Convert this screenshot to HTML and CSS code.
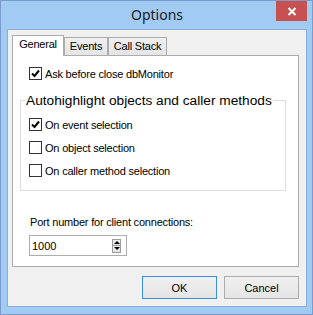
FILE: index.html
```html
<!DOCTYPE html>
<html>

<head>
    <meta charset="utf-8">
    <link rel="stylesheet" href="styles.css">
</head>

<body>

    <div class="window">
        <div class="titlebar">
            <span></span>
            <div class="title">Options</div>
            <div class="close">
                <svg width="10" height="9" viewBox="0 0 10 9">
                    <path d="M1.5 1 L8.5 8 M8.5 1 L1.5 8" stroke="#fff" stroke-width="2" fill="none" />
                </svg>
            </div>
        </div>

        <div class="client">
            <div class="tabs">
                <div class="tab tab-general active">General</div>
                <div class="tab tab-events">Events</div>
                <div class="tab tab-stack">Call Stack</div>
            </div>

            <div class="page">
                <div class="check-row top-row">
                    <span class="box">
                        <svg width="11" height="11" viewBox="0 0 11 11">
                            <path d="M2 5.5 L4.5 8 L9 2.5" stroke="#000" stroke-width="2" fill="none" />
                        </svg>
                    </span>
                    <span>Ask before close dbMonitor</span>
                </div>

                <fieldset class="group">
                    <legend>Autohighlight objects and caller methods</legend>
                    <div class="group-list">
                        <div class="check-row">
                            <span class="box">
                                <svg width="11" height="11" viewBox="0 0 11 11">
                                    <path d="M2 5.5 L4.5 8 L9 2.5" stroke="#000" stroke-width="2" fill="none" />
                                </svg>
                            </span>
                            <span>On event selection</span>
                        </div>
                        <div class="check-row">
                            <span class="box"></span>
                            <span>On object selection</span>
                        </div>
                        <div class="check-row">
                            <span class="box"></span>
                            <span>On caller method selection</span>
                        </div>
                    </div>
                </fieldset>

                <div class="port-label">Port number for client connections:</div>
                <div class="spin">
                    <span class="spin-value">1000</span>
                    <span class="spin-buttons">
                        <span class="spin-btn up"></span>
                        <span class="spin-btn down"></span>
                    </span>
                </div>
            </div>

            <div class="buttons">
                <button class="btn default">OK</button>
                <button class="btn">Cancel</button>
            </div>
        </div>
    </div>

</body>

</html>
```

FILE: styles.css
```css
* {
    box-sizing: border-box;
}

body {
    margin: 0;
    font-family: "Liberation Sans", Arial, sans-serif;
    font-size: 11px;
    color: #000;
}

.window {
    width: 313px;
    height: 315px;
    border: 1px solid #7a9ccd;
    background: #a2cbf4;
    padding: 0 5px 7px 6px;
    display: flex;
    flex-direction: column;
}

.titlebar {
    height: 28px;
    flex: none;
    display: grid;
    grid-template-columns: 1fr auto 1fr;
}

.title {
    font-family: "Noto Sans", sans-serif;
    font-size: 14px;
    line-height: 28px;
    color: #1a1a1a;
}

.close {
    justify-self: end;
    width: 31px;
    height: 20px;
    background: #c75050;
    display: flex;
    align-items: center;
    justify-content: center;
}

.client {
    flex: 1;
    background: #f0f0f0;
    border: 1px solid #89acd9;
    padding: 5px 7px 7px 4px;
    display: flex;
    flex-direction: column;
}

/* tab strip */
.tabs {
    display: flex;
    align-items: flex-end;
    border-bottom: 1px solid #acacac;
}

.tab {
    height: 18px;
    border: 1px solid #acacac;
    border-bottom: none;
    background: linear-gradient(#f0f0f0, #e5e5e5);
    padding-top: 1px;
    line-height: 14px;
    text-align: center;
    letter-spacing: -0.2px;
}

.tab.active {
    height: 21px;
    margin-bottom: -1px;
    background: #fff;
}

.tab-general {
    width: 52px;
}

.tab-events {
    width: 44px;
}

.tab-stack {
    width: 59px;
}

.page {
    flex: 1;
    background: #fff;
    border: 1px solid #acacac;
    border-top: none;
    padding: 9px 12px 0 7px;
}

.check-row {
    display: flex;
    align-items: center;
    gap: 3px;
    height: 17px;
    letter-spacing: -0.2px;
}

.top-row {
    padding-left: 9px;
}

.box {
    width: 13px;
    height: 13px;
    flex: none;
    border: 1px solid #333;
    background: #fff;
    display: flex;
    align-items: center;
    justify-content: center;
}

.group {
    margin: 12px 0 0;
    padding: 9px 0 11px 4px;
    border: 1px solid #dcdcdc;
}

.group legend {
    padding: 0 1px;
    font-size: 13.7px;
    line-height: 13px;
}

.group-list {
    display: flex;
    flex-direction: column;
    gap: 6px;
    padding-left: 4px;
}

.port-label {
    margin-top: 24px;
    padding-left: 10px;
    line-height: 14px;
    letter-spacing: -0.2px;
}

.spin {
    margin: 6px 0 0 9px;
    width: 98px;
    height: 21px;
    border: 1px solid #adadad;
    padding: 0 5px 0 2px;
    display: flex;
    align-items: center;
    justify-content: space-between;
}

.spin-buttons {
    display: flex;
    flex-direction: column;
}

.spin-btn {
    width: 9px;
    height: 7px;
    border: 1px solid #9c9c9c;
    background: linear-gradient(#f4f4f4, #e2e2e2);
    display: flex;
    align-items: center;
    justify-content: center;
}

.spin-btn.down {
    border-top: none;
}

.spin-btn.up::after {
    content: "";
    border-left: 3px solid transparent;
    border-right: 3px solid transparent;
    border-bottom: 3px solid #000;
}

.spin-btn.down::after {
    content: "";
    border-left: 3px solid transparent;
    border-right: 3px solid transparent;
    border-top: 3px solid #000;
}

.buttons {
    display: flex;
    justify-content: flex-end;
    gap: 7px;
    margin-top: 9px;
}

.btn {
    width: 75px;
    height: 23px;
    padding: 0;
    border: 1px solid #acacac;
    border-radius: 0;
    background: linear-gradient(#f0f0f0, #e5e5e5);
    font-family: "Liberation Sans", Arial, sans-serif;
    font-size: 11px;
    color: #000;
}

.btn.default {
    border-color: #3c8fe0;
}
```
